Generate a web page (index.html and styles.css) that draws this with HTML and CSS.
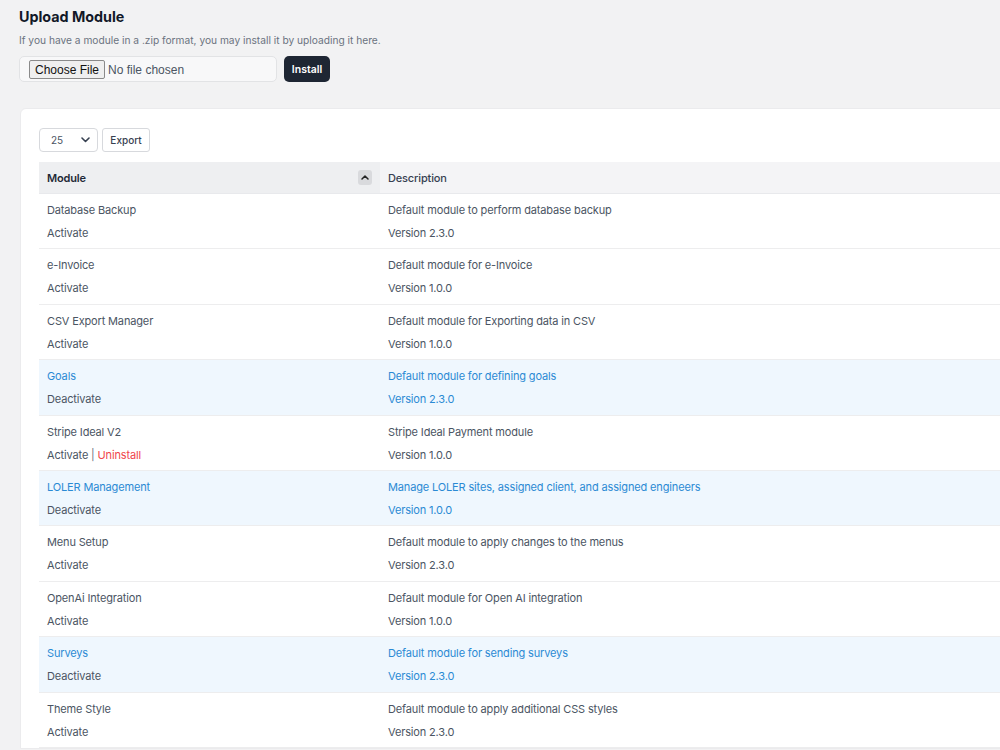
FILE: index.html
```html
<!DOCTYPE html>
<html>
<head>
<meta charset="utf-8">
<link rel="stylesheet" href="styles.css">
</head>
<body>
<main class="page">
  <section class="upload">
    <h1 class="title">Upload Module</h1>
    <p class="hint">If you have a module in a .zip format, you may install it by uploading it here.</p>
    <form class="upload-form">
      <input class="file-input" type="file">
      <button class="btn-install" type="button">Install</button>
    </form>
  </section>

  <section class="card">
    <div class="toolbar">
      <div class="select">
        <span>25</span>
        <svg class="chev" width="9" height="6" viewBox="0 0 9 6"><path d="M1 1l3.5 3.5L8 1" fill="none" stroke="#374151" stroke-width="1.6" stroke-linecap="round" stroke-linejoin="round"/></svg>
      </div>
      <button class="btn-export" type="button">Export</button>
    </div>

    <table class="table">
      <thead>
        <tr>
          <th class="col-module"><div class="th-inner"><span>Module</span><span class="sort"><svg width="8" height="5" viewBox="0 0 8 5"><path d="M1 4l3-3 3 3" fill="none" stroke="#222" stroke-width="1.5" stroke-linecap="round" stroke-linejoin="round"/></svg></span></div></th>
          <th class="col-desc">Description</th>
        </tr>
      </thead>
      <tbody>
        <tr>
          <td><div class="l1">Database Backup</div><div class="l2">Activate</div></td>
          <td><div class="l1">Default module to perform database backup</div><div class="l2">Version 2.3.0</div></td>
        </tr>
        <tr>
          <td><div class="l1">e-Invoice</div><div class="l2">Activate</div></td>
          <td><div class="l1">Default module for e-Invoice</div><div class="l2">Version 1.0.0</div></td>
        </tr>
        <tr>
          <td><div class="l1">CSV Export Manager</div><div class="l2">Activate</div></td>
          <td><div class="l1">Default module for Exporting data in CSV</div><div class="l2">Version 1.0.0</div></td>
        </tr>
        <tr class="active">
          <td><div class="l1">Goals</div><div class="l2">Deactivate</div></td>
          <td><div class="l1">Default module for defining goals</div><div class="l2">Version 2.3.0</div></td>
        </tr>
        <tr>
          <td><div class="l1">Stripe Ideal V2</div><div class="l2">Activate <span class="sep">|</span> <span class="danger">Uninstall</span></div></td>
          <td><div class="l1">Stripe Ideal Payment module</div><div class="l2">Version 1.0.0</div></td>
        </tr>
        <tr class="active">
          <td><div class="l1">LOLER Management</div><div class="l2">Deactivate</div></td>
          <td><div class="l1">Manage LOLER sites, assigned client, and assigned engineers</div><div class="l2">Version 1.0.0</div></td>
        </tr>
        <tr>
          <td><div class="l1">Menu Setup</div><div class="l2">Activate</div></td>
          <td><div class="l1">Default module to apply changes to the menus</div><div class="l2">Version 2.3.0</div></td>
        </tr>
        <tr>
          <td><div class="l1">OpenAi Integration</div><div class="l2">Activate</div></td>
          <td><div class="l1">Default module for Open AI integration</div><div class="l2">Version 1.0.0</div></td>
        </tr>
        <tr class="active">
          <td><div class="l1">Surveys</div><div class="l2">Deactivate</div></td>
          <td><div class="l1">Default module for sending surveys</div><div class="l2">Version 2.3.0</div></td>
        </tr>
        <tr>
          <td><div class="l1">Theme Style</div><div class="l2">Activate</div></td>
          <td><div class="l1">Default module to apply additional CSS styles</div><div class="l2">Version 2.3.0</div></td>
        </tr>
      </tbody>
    </table>
  </section>
</main>
</body>
</html>
```

FILE: styles.css
```css
html, body {
  margin: 0;
  padding: 0;
  overflow: hidden;
}
body {
  background: #f2f2f3;
  font-family: Inter, "Noto Sans", sans-serif;
  color: #4b5563;
}
.page {
  padding: 7px 0 0 19px;
}
.title {
  margin: 0;
  font-size: 14.3px;
  line-height: 20px;
  font-weight: 700;
  color: #111827;
}
.hint {
  margin: 5px 0 0;
  font-size: 10.2px;
  line-height: 16px;
  color: #6b7280;
}
.upload-form {
  margin: 8px 0 0;
  display: flex;
  gap: 7px;
  align-items: center;
}
.file-input {
  box-sizing: border-box;
  width: 258px;
  height: 26px;
  padding: 3px 9px;
  border: 1px solid #e2e3e5;
  border-radius: 5px;
  background: #f8f8f9;
  font-family: "Liberation Sans", Arial, sans-serif;
  font-size: 12px;
  color: #4b5563;
}
.file-input::file-selector-button {
  font-family: "Liberation Sans", Arial, sans-serif;
  font-size: 12px;
  margin-right: 3px;
  padding: 1px 5px;
  height: 19px;
  border: 1px solid #8a8a8a;
  border-radius: 2px;
  background: #efefef;
  color: #111;
}
.btn-install {
  box-sizing: border-box;
  height: 26px;
  width: 46px;
  padding: 0;
  border: 0;
  border-radius: 5px;
  background: #1e2633;
  color: #fff;
  font-family: Inter, sans-serif;
  font-size: 10.5px;
  font-weight: 600;
}
.card {
  margin: 26px 0 0 1px;
  width: 1100px;
  background: #fff;
  border: 1px solid #ebebed;
  border-radius: 6px 0 0 0;
  padding: 19px 0 0 18px;
  box-sizing: border-box;
}
.toolbar {
  display: flex;
  gap: 4px;
  align-items: center;
}
.select {
  box-sizing: border-box;
  width: 59px;
  height: 24px;
  border: 1px solid #d7d9dd;
  border-radius: 4px;
  display: flex;
  align-items: center;
  justify-content: space-between;
  padding: 0 7px 0 11px;
  font-size: 10px;
  color: #4b5563;
}
.btn-export {
  box-sizing: border-box;
  height: 24px;
  width: 48px;
  padding: 0;
  border: 1px solid #d7d9dd;
  border-radius: 3px;
  background: #fff;
  font-family: Inter, sans-serif;
  font-size: 10px;
  font-weight: 500;
  color: #374151;
}
.table {
  margin-top: 10px;
  width: 100%;
  border-collapse: collapse;
  font-size: 11px;
  letter-spacing: -0.15px;
}
.table th {
  height: 31px;
  padding: 0 8px;
  text-align: left;
  font-weight: 600;
  color: #1f2937;
  border-bottom: 1px solid #e8e9ec;
  font-size: 11px;
}
.col-module {
  width: 325px;
  background: #eeeff1;
}
.col-desc {
  background: #f4f4f6;
  font-weight: 500 !important;
  color: #374151 !important;
}
.th-inner {
  display: flex;
  align-items: center;
  justify-content: space-between;
}
.sort {
  width: 14px;
  height: 15px;
  border-radius: 3px;
  background: #d9dadd;
  display: flex;
  align-items: center;
  justify-content: center;
}
.table td {
  padding: 7px 8px 6.4px;
  border-bottom: 1px solid #ededee;
  vertical-align: top;
}
.l1, .l2 {
  line-height: 18px;
  white-space: nowrap;
}
.l2 {
  margin-top: 5px;
}
.active td {
  background: #eff7fe;
}
.active .l1, .active td + td .l2 {
  color: #2b8ad4;
}
.sep {
  color: #6b7280;
}
.danger {
  color: #f0454b;
}
```
